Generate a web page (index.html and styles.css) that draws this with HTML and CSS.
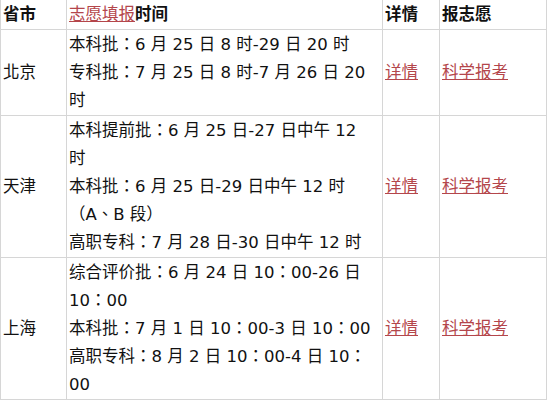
FILE: index.html
```html
<!DOCTYPE html>
<html>
<head>
<meta charset="utf-8">
<link rel="stylesheet" href="styles.css">
</head>
<body>
<table class="schedule">
  <colgroup>
    <col class="w-city">
    <col class="w-time">
    <col class="w-detail">
    <col class="w-apply">
  </colgroup>
  <thead>
    <tr>
      <th>省市</th>
      <th><a class="link" href="#">志愿填报</a>时间</th>
      <th>详情</th>
      <th>报志愿</th>
    </tr>
  </thead>
  <tbody>
    <tr>
      <td>北京</td>
      <td class="c-time">本科批：6 月 25 日 8 时-29 日 20 时<br>专科批：7 月 25 日 8 时-7 月 26 日 20 时</td>
      <td><a class="link" href="#">详情</a></td>
      <td><a class="link" href="#">科学报考</a></td>
    </tr>
    <tr>
      <td>天津</td>
      <td class="c-time">本科提前批：6 月 25 日-27 日中午 12 时<br>本科批：6 月 25 日-29 日中午 12 时（A、B 段）<br>高职专科：7 月 28 日-30 日中午 12 时</td>
      <td><a class="link" href="#">详情</a></td>
      <td><a class="link" href="#">科学报考</a></td>
    </tr>
    <tr>
      <td>上海</td>
      <td class="c-time">综合评价批：6 月 24 日 10：00-26 日 10：00<br>本科批：7 月 1 日 10：00-3 日 10：00<br>高职专科：8 月 2 日 10：00-4 日 10：00</td>
      <td><a class="link" href="#">详情</a></td>
      <td><a class="link" href="#">科学报考</a></td>
    </tr>
  </tbody>
</table>
</body>
</html>
```

FILE: styles.css
```css
html, body {
  margin: 0;
  padding: 0;
  background: #fff;
}
body {
  font-family: "DejaVu Sans", "Noto Sans CJK TC", sans-serif;
  font-size: 16.5px;
  color: #111;
}
.schedule {
  border-collapse: collapse;
  table-layout: fixed;
  width: 546px;
}
.w-city { width: 66px; }
.w-time { width: 316px; }
.w-detail { width: 57px; }
.w-apply { width: 107px; }
.schedule th,
.schedule td {
  border: 1px solid #d6d6d6;
  padding: 1px 2px 0;
  line-height: 28px;
  text-align: left;
  vertical-align: middle;
}
.schedule th {
  border-top: none;
  font-weight: bold;
}
.schedule td.c-time {
  padding-right: 8px;
}
.link {
  color: #b4464b;
  text-decoration: underline;
  font-weight: normal;
}
```
